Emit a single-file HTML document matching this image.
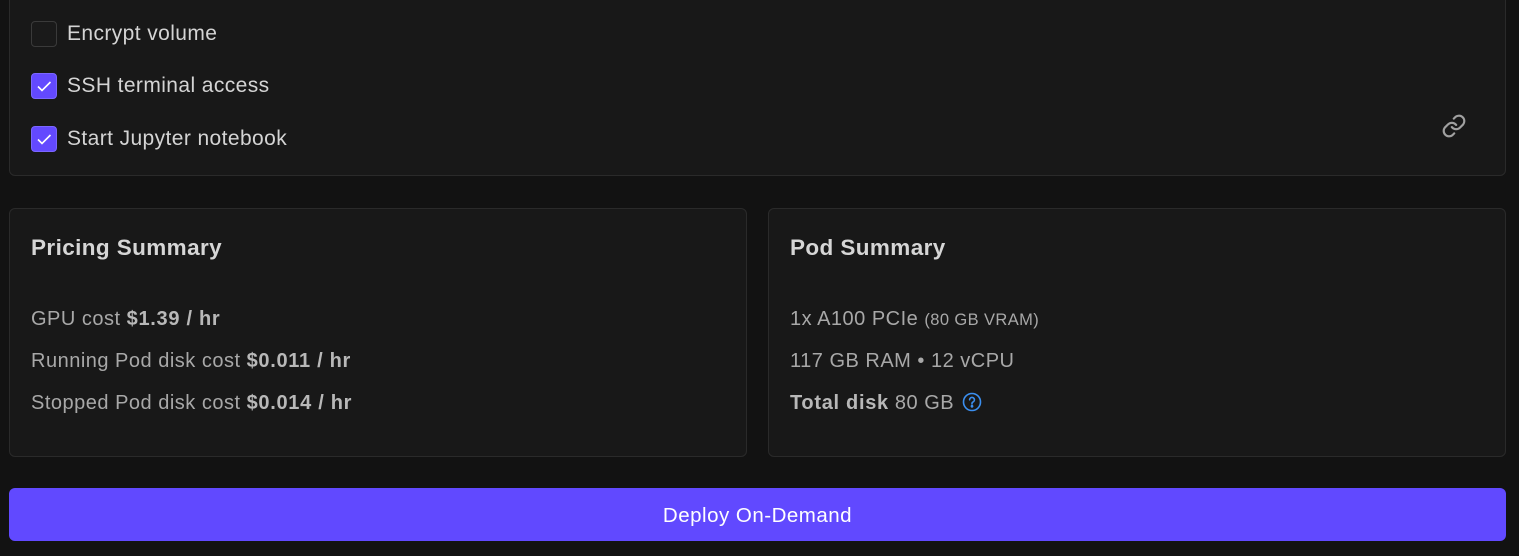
<!DOCTYPE html>
<html><head><meta charset="utf-8"><style>
*{box-sizing:border-box;margin:0;padding:0}
body{width:1519px;height:556px;background:#121212;font-family:"Liberation Sans",sans-serif;position:relative;overflow:hidden}
.card{position:absolute;background:#181818;border:1px solid #2a2a2a;border-radius:6px}
.cb{position:absolute;left:31px;width:26px;height:26px;border-radius:4px}
.cb.off{border:1.5px solid #3a3a3a;background:#1a1a1a}
.cb.on{background:#6349ff;border:1px solid #7a66ff}
.lbl{position:absolute;left:67px;font-size:21px;letter-spacing:0.4px;color:#d4d4d4;line-height:26px}
.t{position:absolute;left:21px;font-size:22.5px;letter-spacing:0.4px;font-weight:bold;color:#d6d6d6}
.r{position:absolute;left:21px;font-size:20px;letter-spacing:0.5px;color:#a8a8a8;line-height:24px;white-space:nowrap}
.r b{color:#b8b8b8;letter-spacing:0.7px}
.btn{position:absolute;left:9px;top:488px;width:1497px;height:53px;background:#6149ff;border-radius:6px;color:#fff;font-size:20.5px;letter-spacing:0.5px;text-align:center;line-height:55px}
</style></head><body>
<div class="card" style="left:9px;top:-20px;width:1497px;height:196px"></div>
<div class="cb off" style="top:21px"></div><div class="lbl" style="top:21px">Encrypt volume</div>
<div class="cb on" style="top:73px"><svg width="24" height="24" viewBox="0 0 24 24"><path d="M6 12.5l4 4L18.5 8" stroke="#fff" stroke-width="1.6" fill="none"/></svg></div><div class="lbl" style="top:73px">SSH terminal access</div>
<div class="cb on" style="top:126px"><svg width="24" height="24" viewBox="0 0 24 24"><path d="M6 12.5l4 4L18.5 8" stroke="#fff" stroke-width="1.6" fill="none"/></svg></div><div class="lbl" style="top:126px">Start Jupyter notebook</div>
<svg style="position:absolute;left:1441px;top:113px" width="26" height="26" viewBox="0 0 24 24" fill="none" stroke="#a0a0a0" stroke-width="2" stroke-linecap="round"><path d="M10 13a5 5 0 0 0 7.5.5l3-3a5 5 0 0 0-7-7l-1.7 1.7"/><path d="M14 11a5 5 0 0 0-7.5-.5l-3 3a5 5 0 0 0 7 7l1.7-1.7"/></svg>

<div class="card" style="left:9px;top:208px;width:738px;height:249px">
<div class="t" style="top:26px">Pricing Summary</div>
<div class="r" style="top:98px">GPU cost <b>$1.39 / hr</b></div>
<div class="r" style="top:140px">Running Pod disk cost <b>$0.011 / hr</b></div>
<div class="r" style="top:182px">Stopped Pod disk cost <b>$0.014 / hr</b></div>
</div>
<div class="card" style="left:768px;top:208px;width:738px;height:249px">
<div class="t" style="top:26px">Pod Summary</div>
<div class="r" style="top:98px">1x A100 PCIe <span style="font-size:16.5px;letter-spacing:0.4px">(80 GB VRAM)</span></div>
<div class="r" style="top:140px">117 GB RAM • 12 vCPU</div>
<div class="r" style="top:182px"><b>Total disk</b>&nbsp;80 GB <svg style="vertical-align:-3px;margin-left:2px" width="20" height="20" viewBox="0 0 20 20" fill="none" stroke="#3b8ff0" stroke-width="1.6"><circle cx="10" cy="10" r="8.5"/><path d="M7.6 7.8a2.4 2.4 0 1 1 3.4 2.2c-.7.3-1 .8-1 1.5v.5" stroke-linecap="round"/><circle cx="10" cy="14.3" r=".6" fill="#3b8ff0"/></svg></div>
</div>
<div class="btn">Deploy On-Demand</div>
</body></html>
